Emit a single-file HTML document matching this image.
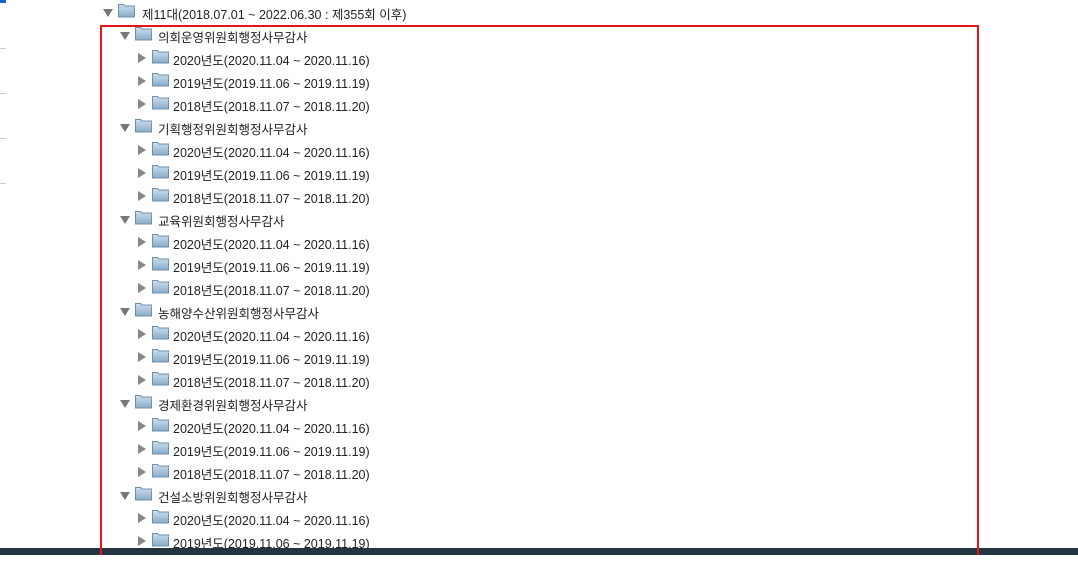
<!DOCTYPE html>
<html><head><meta charset="utf-8"><style>
body{margin:0;width:1078px;height:581px;background:#fff;overflow:hidden;position:relative;font-family:"Liberation Sans","Noto Sans CJK KR",sans-serif;font-size:12.5px;color:#222}
#c{position:absolute;left:0;top:0;width:1078px;height:548px;overflow:hidden}
.r{position:absolute;height:23px;white-space:nowrap}
.t{position:absolute;top:7px;width:0;height:0}
.dn{border-left:5px solid transparent;border-right:5px solid transparent;border-top:8px solid #777}
.rt{border-top:5px solid transparent;border-bottom:5px solid transparent;border-left:8px solid #888;top:5px}
.f{position:absolute;top:1px;width:17px;height:15px}
.tx{position:absolute;top:2px}
.mk{position:absolute;left:0;width:6px;height:1px;background:#ccc}
</style></head><body>
<div style="position:absolute;left:0;top:0;width:6px;height:3px;background:#1a5fd0"></div>
<div class="mk" style="top:48px"></div><div class="mk" style="top:93px"></div><div class="mk" style="top:138px"></div><div class="mk" style="top:183px"></div>
<svg width="0" height="0" style="position:absolute"><defs><linearGradient id="g" x1="0" y1="0" x2="0" y2="1"><stop offset="0" stop-color="#cfe1ef"/><stop offset="1" stop-color="#87abc8"/></linearGradient></defs></svg>
<div id="c"></div>
<div style="position:absolute;left:100px;top:25px;width:875px;height:528px;border:2px solid #e8141b;border-bottom:none"></div>
<div style="position:absolute;left:0;top:548px;width:1078px;height:7px;background:#233540"></div>
<div style="position:absolute;left:100px;top:548px;width:2px;height:7px;background:#e8141b"></div>
<div style="position:absolute;left:977px;top:548px;width:2px;height:7px;background:#e8141b"></div>
<script>
var fold='<svg viewBox="0 0 17 15" width="17" height="15"><path d="M0.5 1.5h5l1.5 1.5h9.5v11h-16z" fill="url(#g)" stroke="#6f8fa8"/><path d="M1 4.5h15.5" stroke="#b9cfe0"/></svg>';
var rows=[[0,1,'제11대(2018.07.01 ~ 2022.06.30 : 제355회 이후)']];
var cs=['의회운영','기획행정','교육','농해양수산','경제환경','건설소방'];
var ys=['2020년도(2020.11.04 ~ 2020.11.16)','2019년도(2019.11.06 ~ 2019.11.19)','2018년도(2018.11.07 ~ 2018.11.20)'];
cs.forEach(function(c){rows.push([1,1,c+'위원회행정사무감사']);ys.forEach(function(y){rows.push([2,0,y])})});
var off=[39,38,36];
var h='';rows.forEach(function(r,i){var top=2+i*23,b=103+r[0]*17;
h+='<div class="r" style="top:'+top+'px;left:0"><div class="t '+(r[1]?'dn':'rt')+'" style="left:'+(r[1]?b:b+1)+'px"></div><div class="f" style="left:'+(b+15)+'px">'+fold+'</div><div class="tx" style="left:'+(b+off[r[0]])+'px">'+r[2]+'</div></div>';});
document.getElementById('c').innerHTML=h;
</script>
</body></html>
